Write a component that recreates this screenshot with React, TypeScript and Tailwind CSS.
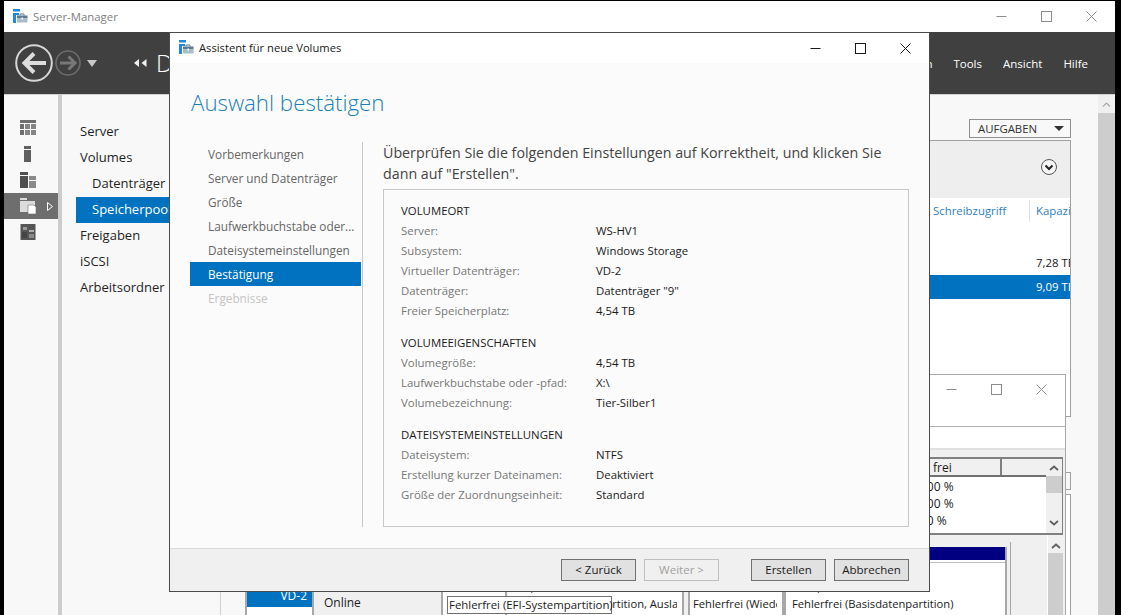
import React from "react";

const AppIcon = () => (
  <svg width="15" height="15" viewBox="0 0 15 15" className="shrink-0">
    <rect x="0" y="0" width="7" height="2.5" fill="#1e88e0" />
    <rect x="0" y="4" width="3" height="10" fill="#1e88e0" />
    <rect x="3" y="4" width="3" height="2" fill="#1e88e0" />
    <path d="M7 6.5V5h4v1.5" fill="none" stroke="#5f7486" strokeWidth="1" />
    <rect x="4" y="6.5" width="10.5" height="3" fill="#5f7a8e" />
    <rect x="4" y="9.5" width="10.5" height="4" fill="#a9bccb" />
    <rect x="8.5" y="8.5" width="1.5" height="2" fill="#fff" />
  </svg>
);

const WinControls = ({ color, gap }: { color: string; gap: string }) => (
  <div className={`flex items-center ${gap}`}>
    <svg width="11" height="11" viewBox="0 0 11 11"><path d="M0.5 5.5H10.5" stroke={color} /></svg>
    <svg width="11" height="11" viewBox="0 0 11 11"><rect x="0.5" y="0.5" width="10" height="10" fill="none" stroke={color} /></svg>
    <svg width="11" height="11" viewBox="0 0 11 11"><path d="M0.5 0.5L10.5 10.5M10.5 0.5L0.5 10.5" stroke={color} /></svg>
  </div>
);

const Row = ({ l, v }: { l: string; v: string }) => (
  <div className="flex h-5 items-center">
    <span className="w-[195px] text-[#777777]">{l}</span>
    <span className="text-[#1a1a1a]">{v}</span>
  </div>
);

const Section = ({ title, rows, cls }: { title: string; rows: [string, string][]; cls?: string }) => (
  <div className={cls}>
    <div className="flex h-5 items-center text-[#1a1a1a]">{title}</div>
    {rows.map(([l, v]) => <Row key={l} l={l} v={v} />)}
  </div>
);

const Btn = ({ children, disabled, cls }: { children: React.ReactNode; disabled?: boolean; cls?: string }) => (
  <div className={`flex h-[22px] w-[75px] items-center justify-center border ${disabled ? "border-[#bfbfbf] bg-[#f0f0f0] text-[#a0a0a0]" : "border-[#707070] bg-[#e1e1e1] text-[#1a1a1a]"} ${cls ?? ""}`}>{children}</div>
);

const sideIcons = [
  <svg key="a" width="16" height="16" viewBox="0 0 16 16" fill="#6e6e6e"><rect width="16" height="3" /><rect y="4" width="4" height="5" /><rect x="5" y="4" width="5" height="5" fill="#858585" /><rect x="11" y="4" width="5" height="5" fill="#858585" /><rect y="10" width="4" height="5" /><rect x="5" y="10" width="5" height="5" fill="#858585" /><rect x="11" y="10" width="5" height="5" fill="#858585" /></svg>,
  <svg key="b" width="16" height="16" viewBox="0 0 16 16" fill="#5f5f5f"><rect x="4" width="7" height="3" /><rect x="4" y="4" width="7" height="12" /></svg>,
  <svg key="c" width="16" height="16" viewBox="0 0 16 16"><rect width="8" height="3" fill="#4f4f4f" /><rect y="4" width="8" height="12" fill="#4f4f4f" /><rect x="9" y="4" width="7" height="4" fill="#8a8a8a" /><rect x="9" y="9" width="7" height="7" fill="#8a8a8a" /></svg>,
  <svg key="d" width="16" height="16" viewBox="0 0 16 16" fill="#dcdcdc"><rect width="7" height="2" /><rect y="3" width="15" height="11" /><path d="M8 7h6l2 2v7H8z" fill="#fff" stroke="#6e6e6e" strokeWidth="0.6" /></svg>,
  <svg key="e" width="16" height="16" viewBox="0 0 16 16" fill="#555555"><rect x="0.5" width="15" height="16" /><rect x="3" y="3" width="4" height="3" fill="#9a9a9a" /><rect x="9" y="6" width="5" height="2" fill="#b0b0b0" /><rect x="2" y="8" width="5" height="6" fill="#444" /><rect x="9" y="10" width="5" height="4" fill="#8a8a8a" /></svg>,
];

const Cell = ({ w, top, bottom, cls, pad }: { w: string; top: string; bottom: string; cls?: string; pad: string }) => (
  <div className={`mt-3 flex shrink-0 flex-col overflow-hidden whitespace-nowrap border-r-2 border-[#a8a8a8] bg-white ${w} ${cls ?? ""}`}>
    <div className="h-[13px] shrink-0 bg-[#000080]" />
    <div className="mt-[2px] h-px shrink-0 bg-[#c0c0c0]" />
    <div className={`mr-[5px] overflow-hidden pt-[17px] text-[11.2px] leading-4 text-[#1a1a1a] ${pad}`}>
      <div>{top}</div>
      <div>{bottom}</div>
    </div>
  </div>
);

const ScrollUp = () => (
  <svg width="10" height="6" viewBox="0 0 10 6" className="shrink-0"><path d="M1 5L5 1.5L9 5" fill="none" stroke="#606060" strokeWidth="1.8" /></svg>
);

export default function App() {
  return (
    <div className="relative h-[615px] w-[1121px] overflow-hidden bg-black pl-1 pt-px text-[11.4px] font-['Open_Sans',sans-serif]">
      <div className="flex h-[614px] w-[1111px] flex-col bg-white">
        {/* title bar */}
        <div className="flex h-[31px] shrink-0 items-center justify-between bg-white pl-[9px] pr-[18px]">
          <div className="flex items-center gap-[5px] text-[#808080]"><AppIcon /><span className="text-[11.4px]">Server-Manager</span></div>
          <WinControls color="#8c8c8c" gap="gap-[34px]" />
        </div>
        {/* header */}
        <div className="flex h-[62px] shrink-0 items-center justify-between bg-[#404040] pl-[11px] pr-[27px] text-white">
          <div className="flex items-center">
            <svg width="38" height="38" viewBox="0 0 38 38">
              <circle cx="19" cy="19" r="17.8" fill="none" stroke="#d6d6d6" strokeWidth="2" />
              <path d="M31 19H10M19 9.5L9.5 19L19 28.5" fill="none" stroke="#dcdcdc" strokeWidth="4" />
            </svg>
            <svg width="26" height="26" viewBox="0 0 26 26" className="ml-[2px]">
              <circle cx="13" cy="13" r="12" fill="none" stroke="#6c6c6c" strokeWidth="1.6" />
              <path d="M5 13H19M13.5 6.5L20 13L13.5 19.5" fill="none" stroke="#787878" strokeWidth="3" />
            </svg>
            <svg width="10" height="7" viewBox="0 0 10 7" className="ml-[6px]"><path d="M0 0H10L5 7Z" fill="#c8c8c8" /></svg>
            <svg width="13" height="8" viewBox="0 0 13 8" className="ml-[37px]"><path d="M5 0V8L0 4ZM12.5 0V8L7.5 4Z" fill="#efefef" /></svg>
            <span className="ml-[9px] whitespace-nowrap text-[24px] font-light">Datei- und Speicherdienste</span>
          </div>
          <div className="flex items-center gap-[21px] pt-[2px] text-[11.5px]">
            <span>Verwalten</span><span>Tools</span><span>Ansicht</span><span>Hilfe</span>
          </div>
        </div>
        {/* body */}
        <div className="flex min-h-0 flex-1 border-t border-[#d0d0d0]">
          <div className="w-[58px] shrink-0 border-r-4 border-[#cccccc] bg-[#f8f8f8] pt-5">
            {sideIcons.map((ic, i) => (
              <div key={i} className={`relative flex h-[26px] items-center pl-4 ${i === 3 ? "bg-[#6e6e6e]" : ""}`}>
                {ic}
                {i === 3 && <svg width="6" height="9" viewBox="0 0 6 9" className="ml-[11px]"><path d="M0.5 0.5L5.5 4.5L0.5 8.5Z" fill="none" stroke="#ffffff" /></svg>}
              </div>
            ))}
          </div>
          <div className="w-[150px] shrink-0 bg-[#f8f8f8] pl-[14px] pt-6 text-[13px] text-[#1f1f1f]">
            {["Server", "Volumes", "Datenträger", "Speicherpools", "Freigaben", "iSCSI", "Arbeitsordner"].map((t, i) => (
              <div key={t} className={`flex h-[26px] items-center whitespace-nowrap ${i === 2 || i === 3 ? "pl-4" : "pl-1"} ${i === 3 ? "bg-[#0072c0] text-white" : ""}`}>{t}</div>
            ))}
          </div>
          <div className="flex min-w-0 flex-1 flex-col bg-[#f8f8f8] pl-2 pr-[27px] pt-6">
            <div className="flex h-[19px] w-full shrink-0 justify-end">
              <div className="flex w-[102px] items-center justify-between border border-[#8f8f8f] pl-2 pr-[6px] text-[#333333]">
                <span>AUFGABEN</span>
                <svg width="10" height="5" viewBox="0 0 10 5"><path d="M0 0H10L5 5Z" fill="#333333" /></svg>
              </div>
            </div>
            <div className="mt-[2px] h-[277px] shrink-0 overflow-hidden border border-[#a0a0a0] bg-white">
              <div className="flex h-[57px] items-center justify-end bg-[#eeeeee] pb-[5px] pr-[12px]">
                <svg width="18" height="18" viewBox="0 0 18 18"><circle cx="9" cy="9" r="7.5" fill="#f5f5f5" stroke="#555555" /><path d="M5.5 7.5L9 11L12.5 7.5" fill="none" stroke="#222222" strokeWidth="2" /></svg>
              </div>
              <div className="flex h-6 justify-end pt-[2px] text-[#2f7fb8]">
                <div className="flex w-[100px] items-center border-r border-[#e0e0e0] pl-[3px]">Schreibzugriff</div>
                <div className="flex w-[40px] items-center overflow-hidden whitespace-nowrap pl-[6px]">Kapazität</div>
              </div>
              <div className="h-[29px]" />
              <div className="flex h-6 items-center justify-end overflow-hidden whitespace-nowrap text-[#1a1a1a]"><div className="w-[34px]">7,28 TB</div></div>
              <div className="flex h-6 items-center justify-end overflow-hidden whitespace-nowrap bg-[#0072c0] text-white"><div className="w-[34px]">9,09 TB</div></div>
            </div>
            <div className="mt-[55px] flex h-[18px] shrink-0 justify-end">
              <div className="w-[102px] border border-[#a0a0a0]" />
            </div>
            <div className="mt-1 min-h-0 flex-1 border border-b-0 border-[#a0a0a0] bg-white" />
          </div>
          <div className="flex w-[17px] shrink-0 flex-col bg-[#cdcdcd]">
            <div className="flex h-[18px] items-center justify-center bg-[#f0f0f0]">
              <svg width="9" height="5" viewBox="0 0 9 5"><path d="M1 4.5L4.5 1L8 4.5" fill="none" stroke="#a8a8a8" strokeWidth="1.2" /></svg>
            </div>
          </div>
        </div>
      </div>

      {/* disk management window (behind the wizard) */}
      <div className="absolute left-[220px] top-[374px] flex h-[241px] w-[846px] flex-col border border-b-0 border-[#a8a8a8] border-l-[#d0d0d0] bg-white">
        <div className="flex h-[52px] shrink-0 items-start justify-end border-b border-[#b0b0b0] pr-[18px] pt-[9px]">
          <WinControls color="#8c8c8c" gap="gap-[34px]" />
        </div>
        <div className="h-[23px] shrink-0 border-b-2 border-[#e0e0e0]" />
        <div className="flex min-h-0 flex-1 flex-col bg-[#f0f0f0]">
          <div className="ml-6 mr-[2px] mt-[7px] flex h-[78px] shrink-0 border-t-2 border-b-2 border-r border-[#808080] bg-white">
            <div className="flex min-w-0 flex-1 flex-col">
              <div className="flex h-[18px] shrink-0 justify-end border-b-2 border-[#707070] bg-[#f0f0f0]">
                <div className="flex w-[84px] items-center border-r-2 border-[#808080] pl-[2px] pt-[1px] text-[12px] text-[#1a1a1a]">% frei</div>
                <div className="w-[44px]" />
              </div>
              <div className="flex flex-col items-end pr-[44px] pt-[1px] text-[12px] leading-[17px] text-[#1a1a1a]">
                <div className="w-[84px] pl-[2px]">100 %</div>
                <div className="w-[84px] pl-[2px]">100 %</div>
                <div className="w-[84px] pl-[2px]">50 %</div>
              </div>
            </div>
            <div className="flex w-4 shrink-0 flex-col items-center bg-[#f0f0f0] pt-[6px]">
              <ScrollUp />
              <div className="mt-[5px] h-[17px] w-full bg-[#cdcdcd]" />
              <div className="flex-1" />
              <svg width="10" height="6" viewBox="0 0 10 6" className="mb-[7px]"><path d="M1 1L5 4.5L9 1" fill="none" stroke="#606060" strokeWidth="1.8" /></svg>
            </div>
          </div>
          <div className="flex min-h-0 flex-1 text-[12px]">
            <div className="w-6 shrink-0 bg-[#f8f8f8]" />
            <div className="flex h-full w-[69px] shrink-0 flex-col border-x-2 border-[#a8a8a8] bg-white">
              <div className="h-[48px]" />
              <div className="flex h-6 items-center justify-end bg-[#0072c0] pr-[5px] pt-[1px] text-white">VD-2</div>
            </div>
            <div className="w-[123px] shrink-0 pl-[10px] pt-[59px] text-[#1a1a1a]">Online</div>
            <div className="w-1 shrink-0" />
            <Cell w="w-[66px]" pad="pl-[5px]" top="100 MB" bottom="Fehlerfrei (EFI-Systempartition)" cls="border-l-2" />
            <div className="w-px shrink-0" />
            <Cell w="w-[176px]" pad="pl-[10px]" top="99,27 GB NTFS" bottom="Fehlerfrei (Startpartition, Auslagerungsdatei)" />
            <div className="w-1 shrink-0" />
            <Cell w="w-[96px]" pad="pl-[3px]" top="99 MB" bottom="Fehlerfrei (Wiederherstellungspartition)" cls="border-l-2" />
            <Cell w="w-[223px]" pad="pl-[6px]" top="1163,82 GB NTFS" bottom="Fehlerfrei (Basisdatenpartition)" cls="border-l-2" />
            <div className="ml-[3px] mt-[7px] w-px shrink-0 bg-[#a8a8a8]" />
            <div className="flex-1" />
            <div className="mr-[2px] flex w-4 shrink-0 flex-col items-center border-l border-white pt-2">
              <ScrollUp />
              <div className="mt-1 w-full flex-1 bg-[#cdcdcd]" />
            </div>
          </div>
        </div>
      </div>

      {/* tooltip */}
      <div className="absolute left-[447px] top-[596px] flex h-[18px] w-[165px] items-center whitespace-nowrap border border-[#707070] bg-white pl-[1px] text-[11.4px] text-[#1a1a1a]">Fehlerfrei (EFI-Systempartition)</div>

      {/* wizard dialog */}
      <div className="absolute left-[169px] top-[32px] flex h-[560px] w-[761px] flex-col border border-[#4a4a4a] bg-[#fbfbfb]">
        <div className="flex h-[30px] shrink-0 items-center justify-between bg-white pl-[9px] pr-[18px] text-[11.2px] text-[#1a1a1a]">
          <div className="flex items-center gap-[5px]"><AppIcon /><span>Assistent für neue Volumes</span></div>
          <WinControls color="#1a1a1a" gap="gap-[34px]" />
        </div>
        <div className="h-[79px] shrink-0 pl-[21px] pt-[25px] text-[22.3px] font-light leading-[30px] text-[#1b7fb5]">Auswahl bestätigen</div>
        <div className="flex min-h-0 flex-1 pl-[20px]">
          <div className="w-[172px] shrink-0 pr-px text-[11.8px] text-[#666666]">
            {["Vorbemerkungen", "Server und Datenträger", "Größe", "Laufwerkbuchstabe oder...", "Dateisystemeinstellungen", "Bestätigung", "Ergebnisse"].map((t, i) => (
              <div key={t} className={`flex h-6 items-center pl-[18px] pt-[2px] ${i === 5 ? "bg-[#0072c0] text-white" : ""} ${i === 6 ? "text-[#c4c4c4]" : ""}`}>{t}</div>
            ))}
          </div>
          <div className="mb-[21px] border-l border-[#c8c8c8] pl-5">
            <div className="w-[526px] text-[14.25px] leading-[21px] text-[#444444]">
              Überprüfen Sie die folgenden Einstellungen auf Korrektheit, und klicken Sie dann auf "Erstellen".
            </div>
            <div className="mt-[5px] h-[338px] w-[526px] border border-[#c8c8c8] pl-[17px] pt-[11px]">
              <Section title="VOLUMEORT" rows={[["Server:", "WS-HV1"], ["Subsystem:", "Windows Storage"], ["Virtueller Datenträger:", "VD-2"], ["Datenträger:", 'Datenträger "9"'], ["Freier Speicherplatz:", "4,54 TB"]]} />
              <Section cls="mt-3" title="VOLUMEEIGENSCHAFTEN" rows={[["Volumegröße:", "4,54 TB"], ["Laufwerkbuchstabe oder -pfad:", "X:\\"], ["Volumebezeichnung:", "Tier-Silber1"]]} />
              <Section cls="mt-3" title="DATEISYSTEMEINSTELLUNGEN" rows={[["Dateisystem:", "NTFS"], ["Erstellung kurzer Dateinamen:", "Deaktiviert"], ["Größe der Zuordnungseinheit:", "Standard"]]} />
            </div>
          </div>
        </div>
        <div className="flex h-[43px] shrink-0 items-center justify-end border-t border-[#dadada] bg-[#f0f0f0] pr-[20px] text-[11.5px]">
          <Btn>&lt; Zurück</Btn>
          <Btn disabled cls="ml-2">Weiter &gt;</Btn>
          <Btn cls="ml-[32px]">Erstellen</Btn>
          <Btn cls="ml-2">Abbrechen</Btn>
        </div>
      </div>
    </div>
  );
}
